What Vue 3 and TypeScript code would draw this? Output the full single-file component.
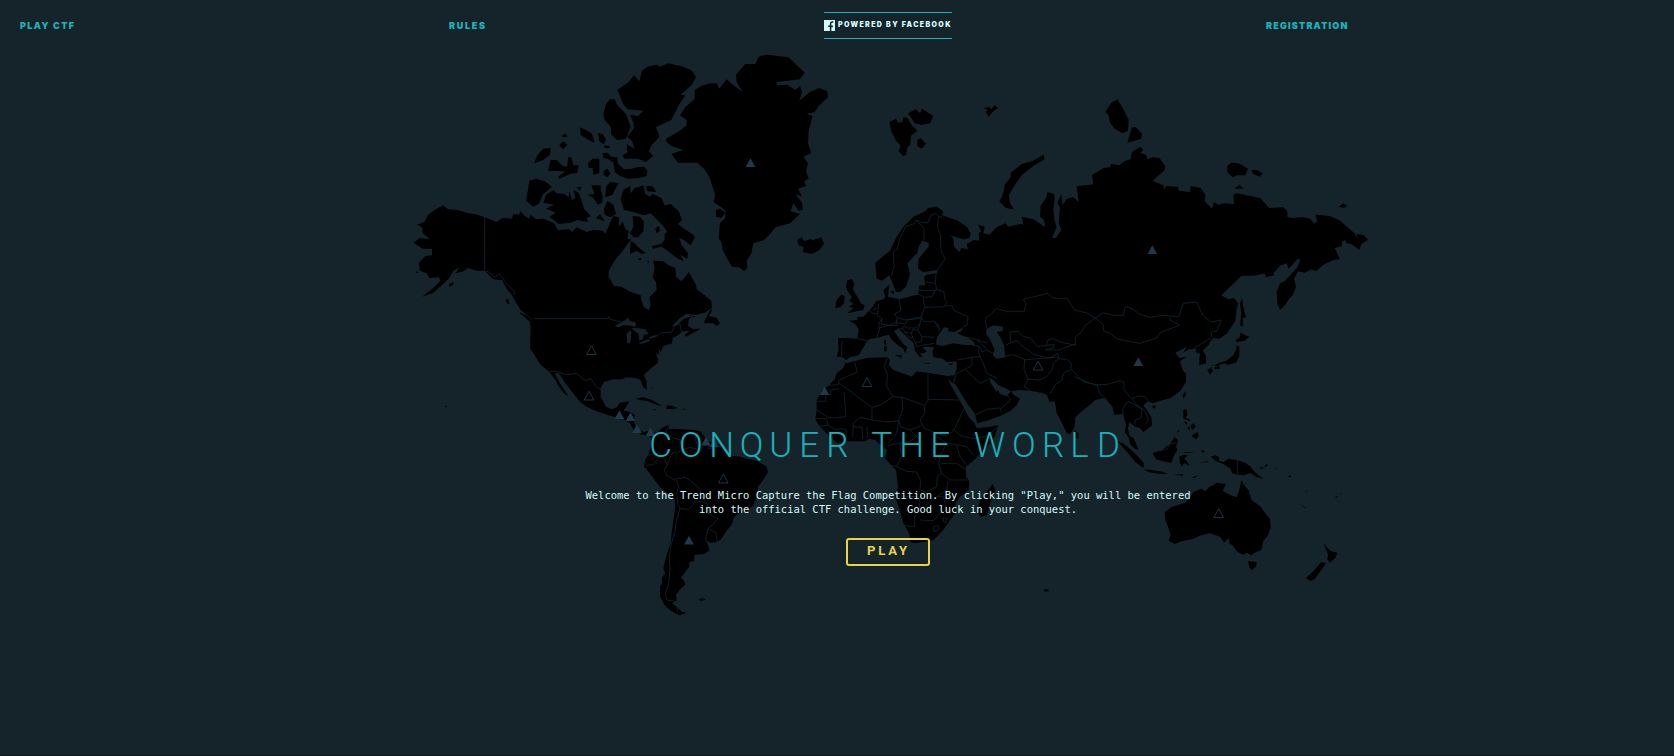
<script setup lang="ts">
interface Region {
  x: number
  y: number
  land: string[]
  water?: string[]
  borders?: string[]
}

interface Marker {
  x: number
  y: number
  captured: boolean
}

// Each region is drawn on its own grid, three units to a pixel, from the origin x, y.
const regions: Region[] = [
  {
    x: 400,
    y: 180,
    land: [
      '40,188 60,174 90,178 68,160 66,142 52,134 75,124 84,104 108,88 130,76 144,88 172,90 200,98 232,104 254,112 290,126 308,114 336,116 340,102 356,104 362,94 372,106 388,116 392,104 408,118 430,116 462,130 474,150 508,148 516,156 530,142 560,156 580,150 610,152 614,162 622,148 634,120 642,108 656,112 658,140 668,124 676,148 686,152 682,178 694,176 670,210 645,240 626,272 626,290 642,318 665,320 690,335 722,346 724,362 732,382 746,390 752,376 748,352 770,330 768,306 758,292 764,266 760,242 790,244 806,256 826,264 828,290 844,304 856,290 866,276 888,314 890,328 914,346 934,362 936,384 914,398 890,404 858,402 840,414 814,440 830,436 850,418 876,408 866,420 864,438 880,448 902,446 880,458 858,470 854,464 870,453 846,454 836,464 818,474 816,490 790,498 782,516 776,504 778,524 768,520 774,540 774,548 750,568 732,584 740,606 740,630 730,622 722,600 706,594 680,592 666,598 640,598 612,606 602,624 602,650 618,680 636,688 650,682 660,668 688,664 678,682 670,692 690,696 704,704 702,728 712,746 730,756 746,752 756,764 744,764 726,764 700,750 690,730 670,718 640,710 614,702 590,694 560,680 540,666 520,640 496,610 484,590 476,580 464,580 478,606 506,650 490,638 472,612 466,600 448,576 420,552 404,526 390,504 392,440 388,426 396,418 374,400 362,390 346,364 336,346 320,326 306,300 280,298 254,272 230,272 204,264 190,274 166,280 178,262 160,272 146,296 120,320 100,338 66,350 96,328 122,302 116,292 88,294 80,280 60,272 56,250 76,228 96,226 96,206 68,206',
      '912,426 930,390 938,388 926,408 950,414 960,430 952,438 940,430 914,430',
      '868,406 884,408 886,412',
      '358,396 372,402 390,414 404,434 386,422 362,402',
      '318,358 326,358 328,374 320,368',
      '148,312 162,306 158,316 148,320',
      '46,274 56,276 50,280',
      '134,676 142,680 138,682',
      '752,620 756,622 758,628',
    ],
    water: [
      '644,438 672,422 684,414 690,422 708,428 706,440 686,436 668,436 656,442',
      '680,462 690,450 694,456 692,480 690,490 682,490',
      '694,444 716,445 736,448 746,462 732,464 728,478 718,482 716,462 704,452',
      '716,490 732,482 750,476 748,484 724,492',
      '746,472 770,464 774,468 752,476',
    ],
    borders: [
      '254,112 254,272 266,276 284,292 298,280 306,292 322,314 342,332 344,346',
      '400,416 624,416 626,410 630,418 664,426',
      '774,466 784,458 816,456 824,436 840,432 844,454',
      '448,574 470,574 496,584 530,580 556,602 572,596 590,622 602,628',
    ],
  },
  {
    x: 500,
    y: 40,
    land: [
      '498,296 540,272 560,256 560,240 540,226 556,202 584,176 584,150 604,138 630,130 650,130 658,146 680,118 700,136 728,156 710,126 708,104 736,72 766,72 776,50 800,44 866,52 914,98 900,118 830,126 830,136 862,134 886,150 900,138 906,156 898,182 930,156 958,144 982,154 984,172 954,200 944,216 920,222 938,228 926,270 924,310 934,340 910,350 924,370 918,394 926,416 912,424 918,438 894,446 906,470 886,462 906,488 908,510 896,512 880,490 872,514 900,522 870,550 826,562 808,584 792,600 760,610 754,640 740,662 742,684 732,694 718,682 696,680 682,656 668,630 664,606 656,594 660,550 676,534 676,512 662,500 640,486 646,466 628,410 612,386 592,368 534,368 514,342 550,330 514,318 500,306',
      '648,510 660,506 676,518 664,534 648,530',
      '892,600 904,592 914,604 930,598 940,600 964,592 972,612 958,630 936,642 908,636 912,622 896,616',
      '352,150 386,126 402,106 418,124 426,92 442,80 470,74 480,80 504,70 550,80 576,92 588,112 574,136 542,164 556,166 536,196 514,240 492,250 468,262 478,290 456,314 446,334 460,348 438,366 414,356 372,356 368,346 382,338 380,312 404,326 396,304 382,290 402,264 400,248 390,224 414,228 430,212 382,208 368,190 360,168',
      '330,178 344,178 352,196 378,222 386,244 392,260 378,296 352,300 334,284 332,260 314,240 310,222 318,192',
      '240,262 262,272 276,282 284,308 266,300 242,284',
      '294,280 308,282 318,298 312,312 298,304',
      '312,316 328,318 330,324 314,324',
      '184,288 196,280 202,290 190,292',
      '178,316 190,304 202,314 190,328',
      '102,370 112,346 130,326 152,324 150,344 130,360',
      '144,392 152,360 170,360 188,378 202,380 204,352 214,352 220,376 236,376 232,398 210,402 178,416 174,410 196,394',
      '264,370 278,356 298,356 298,400 280,404 278,384 266,384',
      '308,340 322,338 334,350 352,352 354,372 372,388 396,386 410,382 432,380 442,392 440,408 418,414 384,416 360,408 344,396 340,368 326,358 310,354',
      '312,392 322,386 332,400 322,412 310,404',
      '88,422 108,416 134,424 156,440 128,464 118,490 100,500 78,482 84,450',
      '130,488 138,464 160,450 170,460 192,462 206,472 208,454 216,480 226,474 220,450 236,458 246,486 252,506 272,528 260,534 264,546 232,540 212,548 176,552 148,530 168,518 138,506 162,494',
      '230,442 244,440 240,454',
      '264,464 284,462 274,436 302,436 302,450 308,468 306,488 294,494 280,474',
      '316,472 318,440 330,426 356,430 344,450 338,464',
      '312,508 322,482 340,494 348,522 332,532 314,524',
      '288,534 300,522 314,544',
      '362,478 370,450 390,438 392,460 404,444 418,440 430,436 436,462 450,470 458,462 484,474 494,496 512,492 536,514 546,540 534,552 552,566 580,584 584,592 572,616 552,600 538,594 544,614 564,640 562,656 540,644 552,664 530,654 500,630 484,620 458,626 456,618 484,612 494,600 494,582 502,576 488,556 472,540 452,520 432,526 400,516 372,510',
      '438,438 456,438 470,456 442,454',
      '398,528 420,530 432,546 430,574 414,592 400,592 390,580 400,560',
      '466,566 476,558 480,572 470,580',
      '392,604 402,608 424,630 438,638 424,642 410,632 390,642',
      '414,656 426,654 420,662',
      '441,664 446,662 446,670',
    ],
  },
  {
    x: 580,
    y: 370,
    land: [
      '204,182 216,188 232,186 250,172 268,164 266,178 282,176 310,178 340,180 360,184 370,196 382,212 410,220 430,232 438,250 450,258 480,260 500,266 530,272 560,290 564,306 548,332 534,350 530,380 520,406 500,424 480,430 462,440 456,462 440,482 424,506 412,516 390,518 376,510 384,524 388,540 374,552 344,554 342,574 328,576 328,590 320,600 312,612 302,622 312,632 316,644 302,656 288,674 290,692 276,700 290,710 306,726 320,728 298,736 272,722 254,706 240,680 240,650 246,640 246,622 256,610 250,596 258,560 272,520 276,480 282,440 286,410 284,386 262,370 240,352 224,330 206,306 192,288 196,270 204,256 212,232 214,206 204,192',
      '354,690 366,684 378,688 366,692',
      '168,86 188,82 216,90 240,104 248,108 230,104 200,92 176,90',
      '258,116 262,106 280,108 292,114 280,118 266,116',
      '218,117 230,118 226,121',
      '304,116 316,117 314,120',
    ],
    borders: [
      '204,256 224,252 238,248 250,262 262,286 252,300 262,318 284,330 290,326 318,322 346,344 360,358 364,380 382,402',
      '290,330 296,350 290,372 294,400 300,416 290,450 284,490 274,520 268,560 270,600 266,640 256,672 260,690 290,694 292,726',
      '300,416 326,418 350,392 382,402 384,430 402,440 414,446 400,462 384,476 376,510',
      '384,476 408,488 412,516',
      '196,286 218,284 238,262',
      '268,164 258,184 270,200 300,210 306,240 290,250 280,246 270,262 262,286',
      '306,240 330,232 360,240 378,220',
      '352,186 346,208 356,236',
      '384,214 384,236 410,232 424,228',
    ],
  },
  {
    x: 820,
    y: 90,
    land: [
      '166,518 210,482 230,440 252,408 280,380 316,364 324,354 350,350 370,364 366,376 384,382 414,392 442,412 452,430 448,444 430,448 396,438 386,430 400,446 402,470 418,486 424,474 444,478 440,462 462,450 478,452 476,430 484,424 474,404 494,410 490,430 508,434 530,412 556,400 564,410 600,402 610,404 606,380 640,388 676,412 672,390 660,380 662,348 680,320 682,306 702,312 704,330 700,360 704,392 710,410 696,444 708,444 724,420 716,400 720,352 712,340 724,312 728,346 740,326 760,322 776,336 770,288 815,284 820,280 816,256 850,234 870,232 874,222 898,226 916,212 932,208 936,186 962,170 970,180 960,188 978,194 982,208 998,202 1018,204 1036,228 1034,240 998,272 1030,286 1032,298 1040,288 1074,290 1076,302 1110,306 1112,288 1142,294 1156,314 1154,334 1176,356 1182,336 1194,344 1212,340 1242,342 1240,314 1250,310 1320,324 1348,354 1390,352 1402,364 1402,380 1414,384 1450,382 1470,386 1482,400 1492,394 1486,374 1530,378 1560,392 1606,432 1608,444 1612,432 1632,436 1644,450 1624,462 1618,480 1594,462 1580,460 1576,450 1566,456 1566,468 1544,474 1560,508 1540,510 1510,524 1488,544 1474,538 1454,548 1434,544 1422,566 1428,590 1418,616 1406,628 1396,644 1380,660 1372,640 1370,606 1380,580 1394,574 1432,532 1442,508 1432,508 1406,536 1400,520 1382,526 1360,550 1362,556 1338,562 1334,550 1310,556 1264,558 1204,616 1224,628 1242,624 1254,640 1250,660 1246,692 1222,730 1198,746 1180,744 1172,752 1166,764 1148,782 1158,798 1158,820 1138,826 1138,806 1140,792 1126,786 1130,776 1106,778 1090,788 1100,770 1066,788 1078,804 1100,800 1080,814 1088,840 1098,852 1098,876 1080,904 1052,924 1020,932 998,940 984,934 970,946 980,960 994,982 996,1006 970,1026 960,1014 946,1010 928,996 924,1016 928,1036 942,1046 956,1080 944,1076 930,1062 926,1042 914,1026 918,1004 908,972 882,974 878,952 862,932 850,924 826,930 810,944 780,968 766,982 764,1010 750,1034 740,1028 724,996 710,970 706,942 704,934 688,936 682,916 666,908 630,902 600,900 572,904 556,894 536,886 520,870 508,864 512,880 530,906 534,900 540,912 560,918 574,904 580,914 600,926 590,946 572,962 540,978 500,992 472,1000 464,970 444,944 424,912 408,886 400,880 404,856 410,838 410,814 380,816 368,806 340,802 338,784 342,772 322,770 306,772 320,784 312,790 300,788 308,802 298,800 284,780 280,760 264,744 250,730 236,716 222,722 236,744 250,762 262,772 256,790 250,776 232,764 214,748 206,734 190,738 170,744 150,746 140,756 126,780 116,796 90,802 78,810 68,802 50,800 56,780 54,744 80,744 112,746 116,720 108,704 88,692 112,690 112,680 130,680 146,664 158,650 168,634 190,628 196,620 190,600 208,584 206,600 204,620 238,628 262,622 284,616 294,614 296,602 298,586 316,586 312,560 320,554 352,550 352,540 310,546 294,536 296,506 326,470 326,458 306,452 296,470 292,488 262,520 270,552 258,590 240,606 228,606 216,576 208,556 186,572 170,566',
      '82,570 96,568 104,582 98,596 104,608 116,626 122,640 134,646 130,660 110,664 82,670 100,654 86,650 100,642 88,632 96,620 84,606 78,590',
      '50,630 64,614 74,618 72,640 60,652 46,654',
      '192,752 198,750 198,766 194,764',
      '192,768 200,768 200,784 192,784',
      '224,796 246,794 244,804',
      '304,818 330,820 328,823',
      '384,823 400,819 394,826',
      '212,604 222,602 220,614',
      '208,96 228,86 234,98 248,96 250,82 262,84 274,104 292,122 274,136 270,166 262,172 258,194 250,198 236,184 242,166 228,152 214,124',
      '264,70 288,58 300,70 306,56 340,78 330,100 304,104 284,100 274,84',
      '292,150 302,144 318,162 304,176 292,168',
      '488,56 508,50 514,58 524,46 534,54 520,64 506,80 498,66 502,56',
      '670,194 674,208 640,228 606,254 580,292 566,316 570,340 582,358 558,354 538,334 546,320 552,300 554,284 572,262 572,248 606,222 640,212',
    ],
    water: [
      '348,756 352,740 372,712 386,714 384,724 404,726 430,712 424,724 412,730 440,742 458,752 466,764 440,766 400,760 366,768 350,764',
      '500,716 520,706 550,710 548,722 530,726 540,740 552,764 556,802 530,806 518,796 524,780 510,748 498,732',
    ],
    borders: [
      '214,558 222,530 220,486 232,478 238,450 256,410 280,402 288,390 312,414 312,452',
      '290,390 304,398 324,398 332,376 346,370 356,378 352,410 362,436 362,470 366,490 376,506 352,540',
      '356,378 366,384',
      '348,552 346,578 350,598 372,606 374,628 382,636 374,648 396,646 402,662 444,680 442,704 428,712',
      '318,576 346,580',
      '296,600 324,602 350,600',
      '294,612 314,622 336,620 346,600',
      '238,628 242,662 224,672 232,684 258,690 304,680 314,652 310,622',
      '314,652 374,650',
      '304,680 308,694 342,694 360,718',
      '342,694 354,704 358,724',
      '176,642 172,678 186,686 176,700 178,720 170,744',
      '146,662 160,670 172,672',
      '158,658 172,656',
      '186,686 184,702 206,706 228,698 232,684',
      '178,714 206,706 232,706 228,690',
      '228,698 256,702 262,690 304,684 300,700 286,714 262,714 250,708 248,716 236,716',
      '300,700 294,720 306,740 344,742',
      '248,716 254,726 274,730 278,718 294,722',
      '254,726 270,744 278,742 274,730',
      '278,742 286,758 304,754 306,740',
      '286,758 290,770 304,766 344,760',
      '276,752 284,776',
      '66,752 64,800',
      '112,746 144,752',
      '440,742 470,748 502,760',
      '458,766 478,768 486,786 500,780 520,790',
      '470,750 482,760 500,776',
      '478,768 474,780 480,800 456,802 412,810',
      '480,800 490,820 500,850 530,864',
      '456,802 456,826 436,838 410,850',
      '436,838 480,880 508,866',
      '410,850 400,880',
      '556,798 580,794 614,808 612,836 624,868 612,890 630,902',
      '500,714 496,686 530,656 560,664 612,664 618,642 610,628 684,610 694,622 716,626 740,624 764,660 798,668 826,684 796,706 784,726 766,742 766,766 720,756 700,746 684,750 678,766 652,770 632,744 612,740 594,724 570,726 572,758 556,766',
      '572,758 592,752 604,766 630,784 640,792 660,798 690,804 716,800',
      '678,766 702,764 700,774 676,780 690,780 716,780 744,770 766,762',
      '612,810 650,806 690,804 714,790 716,806 700,818 698,838 680,860 660,870 624,868',
      '716,806 740,808 754,820 752,838 730,850 726,870 706,884 690,912',
      '826,684 850,668 880,676 910,676 916,650 936,656 958,672 990,682 1030,676 1050,678 1050,690 1080,706 1062,712 1020,728 1010,744 960,760 894,748 870,730 850,722 850,704 826,684',
      '1052,678 1076,680 1090,640 1130,636 1146,672 1172,696 1204,690 1190,724 1174,726 1174,744',
      '1172,744 1120,776',
      '754,838 790,876 830,884 858,884 900,872 912,876 912,900 934,926 956,918 974,920 984,932',
      '764,860 800,876 834,888',
      '832,884 838,910 852,920 862,932',
      '908,956 924,934 938,940 966,958 962,984 946,990 944,1002',
      '936,926 950,944 974,962 986,990 976,1004',
      '914,1026 910,980 908,956',
      '464,976 500,958 540,954 544,966',
      '544,954 572,930 560,914',
    ],
  },
  {
    x: 1090,
    y: 90,
    land: [
      '46,66 64,38 82,28 98,54 116,90 114,122 98,130 76,118 60,98 56,76',
      '126,112 138,112 156,132 154,146 112,158',
      '412,228 424,218 446,220 474,236 466,256 440,256 428,262 412,246',
      '484,240 500,240 518,250 510,260 490,252',
      '434,296 448,284 462,296',
      '746,350 760,340 772,348 762,354',
      '450,640 456,624 460,650 468,682 458,684 460,710 450,706 454,670',
    ],
  },
  {
    x: 800,
    y: 330,
    land: [
      '116,90 140,100 200,84 262,82 270,90 266,104 280,120 320,134 336,140 350,124 380,128 420,134 440,138 464,136 458,160 444,146 452,164 476,206 492,234 506,262 524,280 530,294 560,292 594,286 584,320 556,356 520,392 498,410 498,440 508,452 506,480 480,500 466,520 466,550 446,576 430,600 400,630 370,636 344,640 330,636 328,612 310,580 300,544 286,500 294,470 288,420 272,404 254,384 262,360 240,344 226,330 206,326 196,334 140,334 112,340 90,320 70,300 56,284 46,268 50,240 50,212 66,180 84,168 104,148 110,130 130,114 136,100',
      '578,462 586,480 574,510 560,556 542,560 532,545 540,510 560,486',
      '824,300 836,312 834,326 824,324',
    ],
    borders: [
      '164,96 172,126 140,140 116,152 116,164 84,166',
      '116,158 216,232 240,226 280,200 260,170 262,132 252,110 262,84',
      '116,176 92,180 92,194 78,194 78,214 50,214',
      '132,186 138,260 100,264 84,262 50,240',
      '280,200 306,202 374,226 384,212 384,130',
      '384,208 480,210',
      '374,226 374,250 360,270 372,294 410,310 440,318 462,300 476,270 492,236',
      '306,202 308,240 296,270 302,290 330,300 362,288',
      '216,232 216,270 180,262 160,280 158,320',
      '216,270 260,276 296,272 290,310 264,340',
      '46,266 80,266 84,286 60,288',
      '84,286 108,300 122,296 140,300 138,332',
      '104,340 96,318 82,300',
      '160,290 186,292 188,326',
      '200,290 204,326',
      '264,346 300,340 330,334 350,320 330,300',
      '300,340 304,380 290,410 274,406',
      '290,410 320,424 350,426 362,452 360,480 376,486 410,470 412,440 424,430 416,400 424,370 440,340 410,320',
      '440,340 470,344 480,380 498,404',
      '470,344 500,350 520,376',
      '462,300 480,316 520,326 556,320 590,294',
      '424,400 470,400 498,420',
      '424,430 450,450 508,450',
      '376,486 360,500 358,540 344,560 344,590 310,586',
      '286,498 356,500',
      '358,540 384,520 410,500 430,500 440,540 420,550 400,572 360,570',
      '410,500 440,480 444,456',
      '400,592 412,586 418,596 404,606 400,592',
      '430,564 440,566 438,578 430,574 430,564',
    ],
  },
  {
    x: 1080,
    y: 330,
    land: [
      '470,46 478,50 478,78 468,98 446,104 432,100 412,108 400,106 392,112 418,98 440,92 460,76 468,60',
      '482,8 496,16 508,20 494,32 470,36 466,30 478,24',
      '382,120 394,112 398,124 390,134',
      '402,112 418,108 420,116 404,118',
      '308,196 316,184 318,194 310,206',
      '214,230 228,226 224,236',
      '310,240 320,238 322,254 316,264 328,268 332,274 310,266',
      '312,274 322,278 318,284',
      '322,292 330,290 328,302',
      '332,286 340,280 348,290 336,300',
      '334,318 352,306 356,318 348,328 338,320',
      '290,308 300,296 296,306',
      '112,332 132,342 156,362 176,382 192,400 190,414 168,398 146,372 128,352',
      '190,418 214,420 240,424 264,432 240,432 206,426',
      '218,370 226,366 246,360 270,342 284,322 294,330 288,350 292,360 282,376 274,398 250,394 228,388',
      '298,380 310,374 324,376 312,386 320,392 328,408 312,398 306,410 300,400',
      '306,366 344,366 324,369',
      '356,397 386,394 384,397',
      '334,444 358,434 344,444',
      '280,434 310,433 308,437',
      '364,360 374,364 368,370',
      '392,380 406,376 418,382 416,392 432,396 444,386 470,390 496,398 512,410 522,424 536,436 550,446 530,442 510,428 492,436 472,434 456,430 452,416 430,402 408,394',
      '534,414 552,412 560,402 564,406 546,416',
      '582,412 592,418 588,418',
      '622,440 632,434 632,442',
      '254,546 276,530 312,520 330,504 340,486 364,476 376,484 388,470 400,466 410,458 438,462 428,482 452,496 470,502 478,480 484,450 494,468 506,480 514,510 540,528 556,550 570,566 572,592 564,616 550,632 544,660 520,670 516,676 500,668 490,674 470,664 458,646 448,640 446,624 432,638 420,620 390,610 364,616 336,628 304,634 284,642 266,632 272,614 264,590 256,570',
      '504,694 530,696 528,710 516,720 508,712',
      '730,640 744,656 754,664 772,668 766,684 750,698 742,690 744,672',
      '724,696 738,700 722,722 704,748 690,752 678,744 700,724',
      '660,520 680,536 672,532',
      '764,502 774,498 772,504',
      '776,494 786,490 784,493',
      '678,480 682,484 680,486',
      '-108,778 -96,778 -94,784 -106,785',
    ],
    borders: ['472,390 472,434', '220,362 240,362 262,356 270,342 288,338'],
  },
]

const markers: Marker[] = [
  { x: 750.5, y: 163, captured: true },
  { x: 1152.3, y: 250, captured: true },
  { x: 1138.3, y: 362, captured: true },
  { x: 824.5, y: 391, captured: true },
  { x: 689, y: 540.5, captured: true },
  { x: 619.5, y: 415, captured: true },
  { x: 630.5, y: 417, captured: true },
  { x: 637, y: 429, captured: true },
  { x: 650.5, y: 432, captured: true },
  { x: 706, y: 441.5, captured: true },
  { x: 714, y: 443, captured: true },
  { x: 591.5, y: 350.5, captured: false },
  { x: 589, y: 396, captured: false },
  { x: 723.3, y: 479, captured: false },
  { x: 867, y: 382.5, captured: false },
  { x: 1038, y: 366, captured: false },
  { x: 1218.7, y: 513.5, captured: false },
]

// Pen position of every character of the title, spaces included.
const titleX = '-0.7 29 59.3 89.7 119.3 149.3 176.3 205 221.3 249.3 280.3 305 323.7 362 392 420.3 447'
</script>

<template>
  <div class="page">
    <svg class="map" width="1674" height="755" viewBox="0 0 1674 755" aria-hidden="true">
      <g v-for="(r, i) in regions" :key="i" :transform="`translate(${r.x} ${r.y}) scale(0.33333)`">
        <polygon v-for="(p, j) in r.land" :key="'l' + j" class="land" :points="p" />
        <polygon v-for="(p, j) in r.water ?? []" :key="'w' + j" class="water" :points="p" />
      </g>
      <g v-for="(r, i) in regions" :key="'b' + i" :transform="`translate(${r.x} ${r.y}) scale(0.33333)`">
        <polyline v-for="(p, j) in r.borders ?? []" :key="j" class="border" :points="p" />
      </g>
      <path
        v-for="(m, i) in markers"
        :key="'m' + i"
        :class="m.captured ? 'captured' : 'open'"
        d="M0 -4.8 L4.8 4 H-4.8 Z"
        :transform="`translate(${m.x} ${m.y})`"
      />
    </svg>

    <nav class="nav">
      <a class="link">
        <svg width="60" height="12"><text x="0" y="9" textLength="54">PLAY CTF</text></svg>
      </a>
      <a class="link">
        <svg width="50" height="12"><text x="0" y="9" textLength="36">RULES</text></svg>
      </a>
      <a class="brand">
        <svg class="logo" width="11" height="11" viewBox="0 0 11 11">
          <rect width="11" height="11" fill="#d5fbfa" />
          <path d="M6.6 11V6.6H8.7M4.2 6.2H8.9M6.6 8V3.6Q6.6 2 8.2 2H9.4" fill="none" stroke="#14242a" stroke-width="1.5" />
        </svg>
        <svg width="114" height="12"><text x="0" y="8" textLength="112.5">POWERED BY FACEBOOK</text></svg>
      </a>
      <a class="link">
        <svg width="90" height="12"><text x="0" y="9" textLength="81.5">REGISTRATION</text></svg>
      </a>
    </nav>

    <main class="hero">
      <h1 class="title">
        <svg width="476" height="40"><text :x="titleX" y="32">CONQUER THE WORLD</text></svg>
      </h1>
      <p class="intro">
        Welcome to the Trend Micro Capture the Flag Competition. By clicking "Play," you will be entered
        into the official CTF challenge. Good luck in your conquest.
      </p>
      <button class="play" type="button">
        <svg width="44" height="14"><text x="1" y="11" textLength="40">PLAY</text></svg>
      </button>
    </main>
  </div>
</template>

<style>
body {
  background: #14242a;
}
</style>

<style scoped>
.page {
  position: relative;
  width: 1674px;
  height: 756px;
  overflow: hidden;
  box-sizing: border-box;
  background: #14242a;
  border-bottom: 1px solid #0e191d;
  font-family: Roboto, 'Liberation Sans', sans-serif;
}
svg {
  display: block;
  overflow: visible;
}
.map {
  position: absolute;
  inset: 0;
}
.land {
  fill: #000;
}
.water {
  fill: #14242a;
}
.border {
  fill: none;
  stroke: #14262e;
  stroke-width: 2.4;
  stroke-linejoin: round;
}
.captured {
  fill: #1f394b;
}
.open {
  fill: none;
  stroke: #1c3442;
  stroke-width: 1;
}
.nav {
  position: relative;
  display: grid;
  grid-template-columns: 429px 375px 442px 1fr;
  padding: 12px 0 0 20px;
  height: 40px;
  box-sizing: border-box;
}
.link {
  padding-top: 8px;
}
.link text {
  font-family: Inter, Roboto, sans-serif;
  font-size: 9px;
  font-weight: 900;
  fill: #1fb3b9;
}
.brand {
  display: flex;
  align-items: flex-start;
  gap: 3px;
  width: 128px;
  height: 27px;
  box-sizing: border-box;
  border-top: 1px solid #1fb3b9;
  border-bottom: 1px solid #1fb3b9;
  padding-top: 7px;
}
.brand text {
  font-family: Inter, Roboto, sans-serif;
  font-size: 7px;
  font-weight: 900;
  fill: #d5fbfa;
}
.logo {
  flex: none;
}
.brand svg:last-child {
  margin-top: -1px;
}
.hero {
  position: relative;
  display: flex;
  flex-direction: column;
  align-items: center;
  width: 640px;
  margin: 385px 0 0 568px;
}
.title {
  margin: 0;
}
.title text {
  font-family: Roboto, sans-serif;
  font-size: 35px;
  font-weight: 300;
  fill: #1bb1bb;
}
.intro {
  margin: 23px 0 0;
  width: 612px;
  text-align: center;
  font: 10.47px/14px 'DejaVu Sans Mono', monospace;
  color: #d5fbfa;
}
.play {
  display: flex;
  align-items: flex-start;
  justify-content: center;
  width: 84px;
  height: 28px;
  margin: 22px 0 0;
  padding: 4px 0 0;
  border: 2px solid #ead34b;
  border-radius: 3px;
  background: transparent;
}
.play text {
  font-family: Roboto, sans-serif;
  font-size: 13px;
  font-weight: 700;
  fill: #ead34b;
}
</style>
